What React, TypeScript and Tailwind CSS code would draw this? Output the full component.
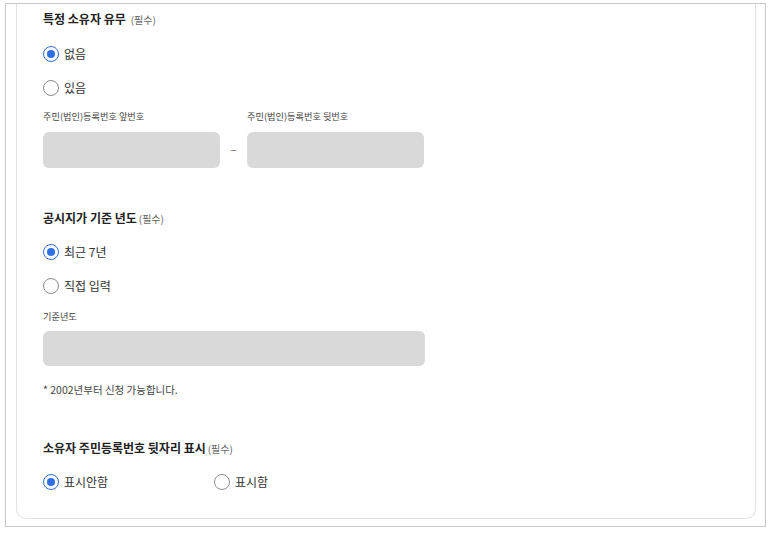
import { useState } from "react";

const font = { fontFamily: '"Noto Sans CJK KR", "Noto Sans", sans-serif' };

function Radio({
  label,
  checked,
  onSelect,
  className = "",
}: {
  label: string;
  checked: boolean;
  onSelect: () => void;
  className?: string;
}) {
  return (
    <label
      className={`flex h-[34px] cursor-pointer items-center gap-[5px] ${className}`}
      onClick={onSelect}
    >
      <span
        className={`flex h-[16px] w-[16px] items-center justify-center rounded-full border ${
          checked ? "border-[1.5px] border-[#2f6fe4]" : "border-[#8c8c8c]"
        }`}
      >
        {checked && <span className="h-[8px] w-[8px] rounded-full bg-[#2f6fe4]" />}
      </span>
      <span className="text-[12px] leading-none text-[#333]">{label}</span>
    </label>
  );
}

function Title({ children, wide = false }: { children: React.ReactNode; wide?: boolean }) {
  return (
    <div className={`flex h-[30px] items-center ${wide ? "gap-[5px]" : "gap-[2px]"}`}>
      <span className="text-[12px] font-bold leading-none text-[#222]">{children}</span>
      <span className="mt-[1px] text-[10px] leading-none text-[#666]">(필수)</span>
    </div>
  );
}

function FieldLabel({ children }: { children: React.ReactNode }) {
  return <div className="flex h-[16px] items-center text-[9.2px] leading-none text-[#444]">{children}</div>;
}

export default function App() {
  const [owner, setOwner] = useState("none");
  const [year, setYear] = useState("recent");
  const [show, setShow] = useState("hide");

  return (
    <div className="h-[533px] w-[771px] bg-white pt-[3px] pl-[5px]" style={font}>
      <div className="h-[524px] w-[761px] overflow-hidden border border-[#c9c9c9]">
        <div className="ml-[10px] w-[740px] rounded-b-[10px] border-x border-b border-[#e3e3e3] pb-[19px] pl-[26px]">
          <Title wide>특정 소유자 유무</Title>
          <div className="mt-[3px]">
            <Radio label="없음" checked={owner === "none"} onSelect={() => setOwner("none")} />
            <Radio label="있음" checked={owner === "yes"} onSelect={() => setOwner("yes")} />
          </div>
          <div className="mt-[4px] flex items-start">
            <div className="w-[177px]">
              <FieldLabel>주민(법인)등록번호 앞번호</FieldLabel>
              <div className="mt-[7px] h-[36px] rounded-[6px] bg-[#d9d9d9]" />
            </div>
            <div className="flex h-[59px] w-[27px] items-end justify-center pb-[10px] text-[12px] text-[#666]">
              –
            </div>
            <div className="w-[177px]">
              <FieldLabel>주민(법인)등록번호 뒷번호</FieldLabel>
              <div className="mt-[7px] h-[36px] rounded-[6px] bg-[#d9d9d9]" />
            </div>
          </div>

          <div className="mt-[35px]">
            <Title>공시지가 기준 년도</Title>
          </div>
          <div className="mt-[2px]">
            <Radio label="최근 7년" checked={year === "recent"} onSelect={() => setYear("recent")} />
            <Radio label="직접 입력" checked={year === "custom"} onSelect={() => setYear("custom")} />
          </div>
          <div className="mt-[6px]">
            <FieldLabel>기준년도</FieldLabel>
          </div>
          <div className="mt-[6px] h-[35px] w-[382px] rounded-[6px] bg-[#d9d9d9]" />
          <div className="mt-[16px] flex h-[16px] items-center text-[10.5px] leading-none text-[#444]">
            * 2002년부터 신청 가능합니다.
          </div>

          <div className="mt-[35px]">
            <Title>소유자 주민등록번호 뒷자리 표시</Title>
          </div>
          <div className="mt-[2px] flex">
            <Radio
              className="w-[171px]"
              label="표시안함"
              checked={show === "hide"}
              onSelect={() => setShow("hide")}
            />
            <Radio label="표시함" checked={show === "show"} onSelect={() => setShow("show")} />
          </div>
        </div>
      </div>
    </div>
  );
}
